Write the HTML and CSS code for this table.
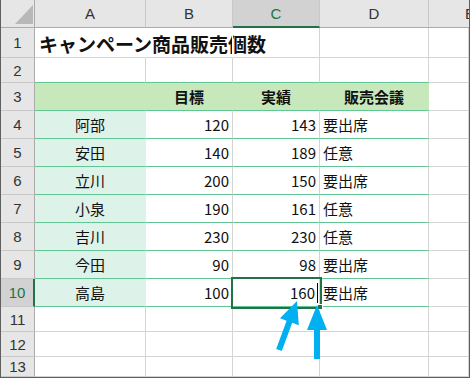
FILE: index.html
```html
<!DOCTYPE html>
<html lang="ja">
<head>
    <meta charset="UTF-8">
    <meta name="viewport" content="width=device-width, initial-scale=1.0">
    <title>キャンペーン商品販売個数</title>
    <link rel="stylesheet" href="styles.css">
</head>
<body>
    <div class="sheet">
        <!-- column headers -->
        <div class="corner"><span class="select-all"></span></div>
        <div class="col-head">A</div>
        <div class="col-head">B</div>
        <div class="col-head selected">C</div>
        <div class="col-head">D</div>
        <div class="col-head clipped">E</div>

        <!-- 1 -->
        <div class="row-head">1</div>
        <div class="cell title no-line">キャンペーン商品販売個数</div>
        <div class="cell no-line"></div>
        <div class="cell"></div>
        <div class="cell"></div>
        <div class="cell"></div>

        <!-- 2 -->
        <div class="row-head">2</div>
        <div class="cell rule"></div>
        <div class="cell rule"></div>
        <div class="cell rule"></div>
        <div class="cell rule"></div>
        <div class="cell"></div>

        <!-- 3 -->
        <div class="row-head">3</div>
        <div class="cell rule head-fill"></div>
        <div class="cell rule head-fill center bold">目標</div>
        <div class="cell rule head-fill center bold">実績</div>
        <div class="cell rule head-fill center bold">販売会議</div>
        <div class="cell"></div>

        <!-- 4 -->
        <div class="row-head">4</div>
        <div class="cell rule name">阿部</div>
        <div class="cell rule num">120</div>
        <div class="cell rule num">143</div>
        <div class="cell rule">要出席</div>
        <div class="cell"></div>

        <!-- 5 -->
        <div class="row-head">5</div>
        <div class="cell rule name">安田</div>
        <div class="cell rule num">140</div>
        <div class="cell rule num">189</div>
        <div class="cell rule">任意</div>
        <div class="cell"></div>

        <!-- 6 -->
        <div class="row-head">6</div>
        <div class="cell rule name">立川</div>
        <div class="cell rule num">200</div>
        <div class="cell rule num">150</div>
        <div class="cell rule">要出席</div>
        <div class="cell"></div>

        <!-- 7 -->
        <div class="row-head">7</div>
        <div class="cell rule name">小泉</div>
        <div class="cell rule num">190</div>
        <div class="cell rule num">161</div>
        <div class="cell rule">任意</div>
        <div class="cell"></div>

        <!-- 8 -->
        <div class="row-head">8</div>
        <div class="cell rule name">吉川</div>
        <div class="cell rule num">230</div>
        <div class="cell rule num">230</div>
        <div class="cell rule">任意</div>
        <div class="cell"></div>

        <!-- 9 -->
        <div class="row-head">9</div>
        <div class="cell rule name">今田</div>
        <div class="cell rule num">90</div>
        <div class="cell rule num">98</div>
        <div class="cell rule">要出席</div>
        <div class="cell"></div>

        <!-- 10: C10 is being edited -->
        <div class="row-head selected">10</div>
        <div class="cell rule name">高島</div>
        <div class="cell rule num">100</div>
        <div class="cell rule num active">160<span class="caret"></span></div>
        <div class="cell rule">要出席</div>
        <div class="cell"></div>

        <!-- 11 - 13 -->
        <div class="row-head">11</div>
        <div class="cell"></div>
        <div class="cell"></div>
        <div class="cell"></div>
        <div class="cell"></div>
        <div class="cell"></div>

        <div class="row-head">12</div>
        <div class="cell"></div>
        <div class="cell"></div>
        <div class="cell"></div>
        <div class="cell"></div>
        <div class="cell"></div>

        <div class="row-head">13</div>
        <div class="cell"></div>
        <div class="cell"></div>
        <div class="cell"></div>
        <div class="cell"></div>
        <div class="cell"></div>

        <svg class="arrows" width="470" height="378" viewBox="0 0 470 378">
            <polygon points="296,301 297.8,325.2 291.2,322.7 280.8,351 275.2,349 285.6,320.7 279,318.2" />
            <polygon points="316,305 326,330 319,330 319,359 313,359 313,330 306,330" />
        </svg>
    </div>
</body>
</html>
```

FILE: styles.css
```css
body {
    margin: 0;
    padding: 0;
    background-color: white;
    font-family: "Noto Sans CJK JP", "Noto Sans", sans-serif;
}

.sheet {
    position: relative;
    display: grid;
    grid-template-columns: 34px 111px 87px 87px 109px 40px;
    grid-template-rows: 28px 30px 25px 28px repeat(7, 28px) 25px 25px 20px;
    width: 470px;
    height: 378px;
    box-sizing: border-box;
    border-left: 1px solid #5f5f5f;
    border-right: 1px solid #5f5f5f;
    border-bottom: 1px solid #5f5f5f;
    overflow: hidden;
    background: white;
}

.sheet > div {
    box-sizing: border-box;
    display: flex;
    align-items: center;
    white-space: nowrap;
    font-size: 15px;
    color: #111;
}

/* headers */
.corner {
    position: relative;
    background-color: #e6e6e6;
    border-right: 1px solid #ababab;
    border-bottom: 1px solid #ababab;
}

.select-all {
    position: absolute;
    left: 14px;
    top: 5px;
    width: 18px;
    height: 19px;
    background-color: #b8b8b8;
    clip-path: polygon(100% 0, 100% 100%, 0 100%);
}

.col-head {
    justify-content: center;
    background-color: #e6e6e6;
    border-right: 1px solid #c8c8c8;
    border-bottom: 1px solid #ababab;
    color: #333 !important;
    font-family: "Liberation Sans", Arial, sans-serif;
}

.col-head.selected {
    background-color: #d2d2d2;
    color: #217346 !important;
    border-bottom: 2px solid #217346;
}

.col-head.clipped {
    justify-content: flex-start;
    padding-left: 36px;
    overflow: hidden;
    border-right: none;
}

.row-head {
    justify-content: center;
    background-color: #e6e6e6;
    border-right: 1px solid #ababab;
    border-bottom: 1px solid #c8c8c8;
    color: #333 !important;
    font-family: "Liberation Sans", Arial, sans-serif;
}

.row-head.selected {
    background-color: #d2d2d2;
    color: #217346 !important;
    border-right: 2px solid #217346;
}

/* cells */
.cell {
    padding: 0 3px;
    border-right: 1px solid #d4d4d4;
    border-bottom: 1px solid #d4d4d4;
}

.cell.title {
    overflow: visible;
    padding-left: 4px;
    font-size: 19px;
    font-weight: bold;
    padding-top: 2px;
}

.cell.no-line {
    border-right-color: white;
}

.cell.rule {
    border-bottom-color: #62c594;
}

.head-fill {
    background-color: #c6e8bb;
    border-right-color: #c6e8bb !important;
}

.name {
    justify-content: center;
    background-color: #ddf2e8;
    border-right-color: #ddf2e8 !important;
}

.center {
    justify-content: center;
}

.bold {
    font-weight: bold;
}

.num {
    justify-content: flex-end;
}

.active {
    position: relative;
    z-index: 2;
    padding-right: 1px;
    outline: 2px solid #217346;
}

.active::after {
    content: "";
    position: absolute;
    right: -4px;
    bottom: -4px;
    width: 4px;
    height: 4px;
    background-color: #217346;
    border: 1px solid white;
}

.caret {
    display: inline-block;
    width: 1px;
    height: 20px;
    margin-left: 2px;
    background-color: #000;
}

.arrows {
    position: absolute;
    top: 0;
    left: 0;
    z-index: 3;
    pointer-events: none;
    fill: #00b0f0;
}
```
